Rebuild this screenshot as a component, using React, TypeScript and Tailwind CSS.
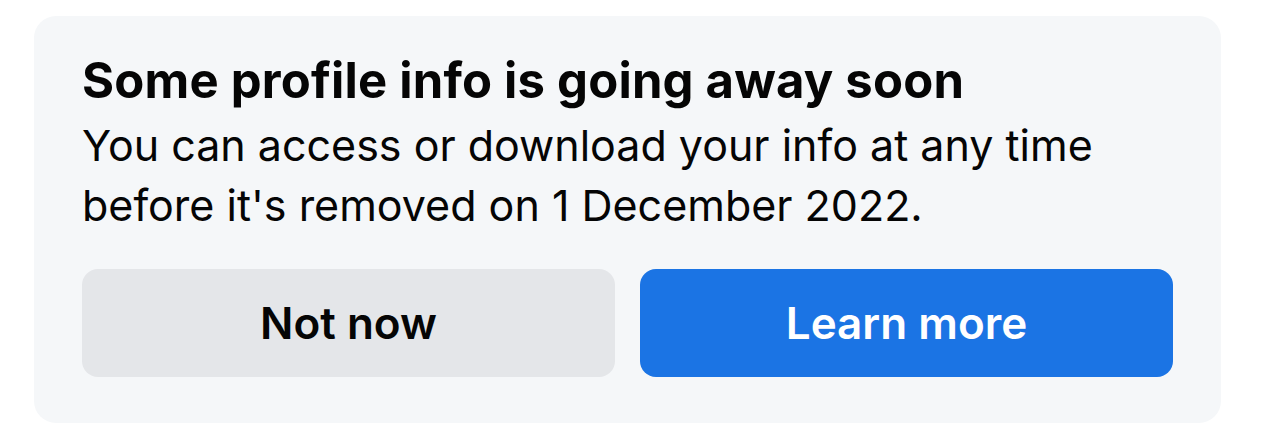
import React from 'react';

const App: React.FC = () => {
  return (
    <div className="min-h-screen bg-white pl-[34px] pr-[44px] pt-[16px]" style={{ fontFamily: 'Inter, "Noto Sans", sans-serif' }}>
      <div className="rounded-[22px] bg-[#f5f7f9] px-[48px] pt-[37px] pb-[46px]">
        <h1 className="text-[49px] font-bold leading-[56px] tracking-[0.2px] text-[#050505]">
          Some profile info is going away soon
        </h1>
        <p className="mt-[6px] text-[43px] leading-[60px] text-[#050505]">
          You can access or download your info at any time
          <br />
          before it's removed on 1 December 2022.
        </p>
        <div className="mt-[34px] flex gap-[25px]">
          <button className="h-[108px] flex-1 rounded-[16px] bg-[#e4e6e9] text-[44px] font-semibold text-[#050505]">
            Not now
          </button>
          <button className="h-[108px] flex-1 rounded-[16px] bg-[#1b74e4] text-[44px] font-semibold text-white">
            Learn more
          </button>
        </div>
      </div>
    </div>
  );
};

export default App;
